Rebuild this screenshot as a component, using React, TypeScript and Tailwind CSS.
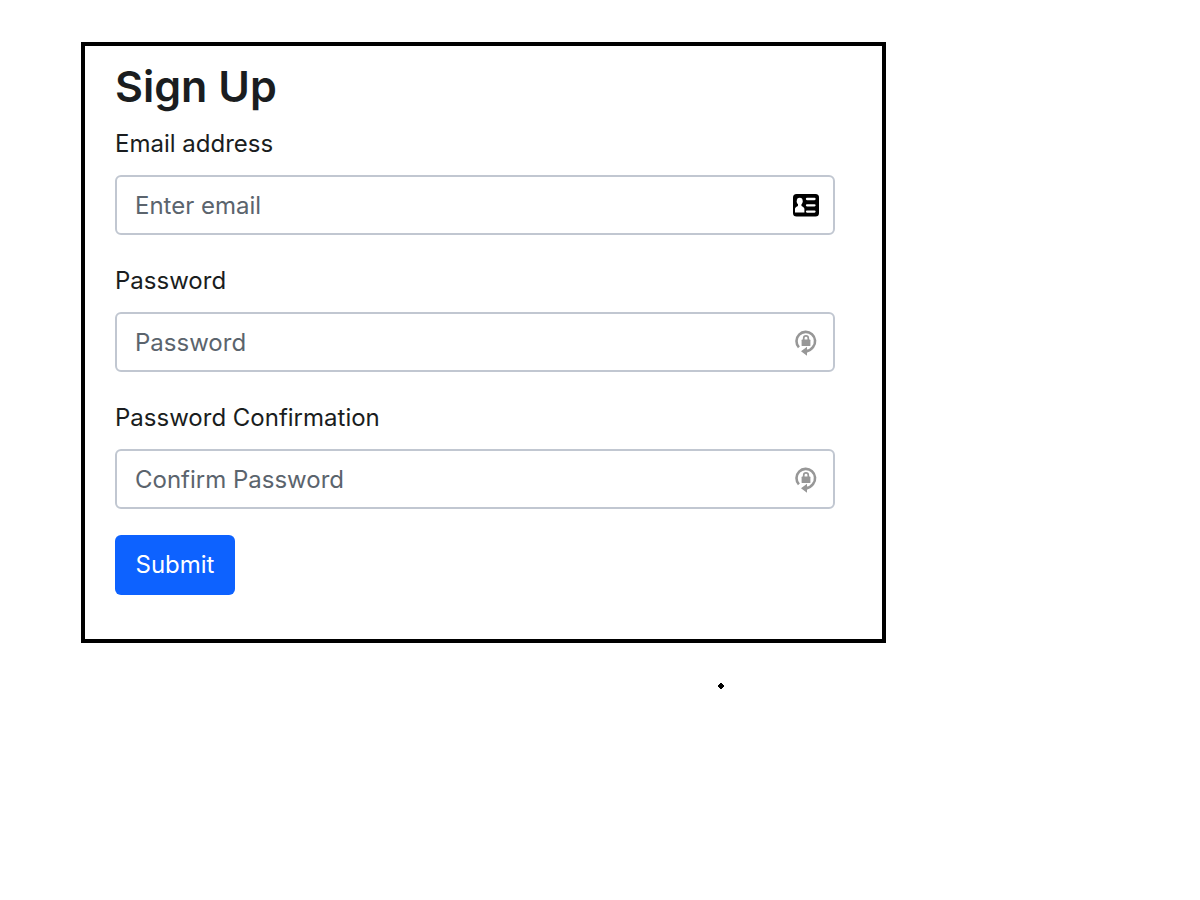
import React from "react";

function ContactCardIcon() {
  return (
    <svg viewBox="0 0 26 23" className="h-[23px] w-[26px]" aria-hidden="true">
      <rect width="26" height="22.500" rx="3.500" fill="#000" />
      <ellipse cx="6.700" cy="7.200" rx="3" ry="3.400" fill="#fff" />
      <path
        d="M5 9h3.400v2.400c0 1 3 1.400 3 3.600v3.500H2v-3.500c0-2.200 3-2.600 3-3.600z"
        fill="#fff"
      />
      <path
        d="M14 5h7.500M14 11.300h7.500M14 17.600h7.500"
        stroke="#fff"
        strokeWidth="2.300"
        strokeLinecap="round"
      />
    </svg>
  );
}

function PasswordResetIcon() {
  return (
    <svg viewBox="0 0 22 27" className="h-[27px] w-[22px]" aria-hidden="true">
      <path
        d="M3.900 18.400A9.300 9.300 0 1 1 18.100 17.900Q15.500 21.600 11 22.200"
        fill="none"
        stroke="#979797"
        strokeWidth="2.600"
      />
      <path d="M6 22.200l6-4.500v2.900l1.500 1.600-1.500 1.600v2.900z" fill="#979797" />
      <rect x="6.600" y="10.600" width="8.800" height="6.400" rx="0.600" fill="#979797" />
      <path
        d="M8.700 11.200V9.200a2.300 2.300 0 0 1 4.600 0v2"
        fill="none"
        stroke="#979797"
        strokeWidth="1.700"
      />
    </svg>
  );
}

type FieldProps = {
  id: string;
  label: string;
  type: string;
  placeholder: string;
  icon: React.ReactNode;
};

function Field({ id, label, type, placeholder, icon }: FieldProps) {
  return (
    <div className="flex flex-col gap-[13px]">
      <label htmlFor={id} className="leading-9">
        {label}
      </label>
      <div className="flex h-[60px] items-center rounded-md border-2 border-[#c1c7d1] bg-white pr-3.5 pl-[18px]">
        <input
          id={id}
          type={type}
          placeholder={placeholder}
          className="h-full min-w-0 flex-1 bg-transparent outline-none placeholder:text-[#5b646d]"
        />
        <span className="flex w-[26px] shrink-0 justify-center">{icon}</span>
      </div>
    </div>
  );
}

export default function App() {
  return (
    <main className="min-h-screen bg-white pt-[42px] pr-6 pl-[81px] font-['Inter','Liberation_Sans',sans-serif] text-2xl text-[#1a1d20]">
      <div className="flex w-full max-w-[805px] flex-col">
        <form
          className="border-4 border-black pt-4 pr-[47px] pb-11 pl-[30px]"
          onSubmit={(event) => event.preventDefault()}
        >
          <h1 className="mb-4 text-[43px] leading-12 font-semibold">Sign Up</h1>
          <div className="flex flex-col gap-7">
            <Field
              id="email"
              label="Email address"
              type="email"
              placeholder="Enter email"
              icon={<ContactCardIcon />}
            />
            <Field
              id="password"
              label="Password"
              type="password"
              placeholder="Password"
              icon={<PasswordResetIcon />}
            />
            <Field
              id="password-confirmation"
              label="Password Confirmation"
              type="password"
              placeholder="Confirm Password"
              icon={<PasswordResetIcon />}
            />
          </div>
          <button
            type="submit"
            className="mt-[26px] flex h-[60px] w-[120px] items-center justify-center rounded-md bg-[#0d62ff] text-white"
          >
            Submit
          </button>
        </form>
        <svg viewBox="0 0 6 6" className="mt-10 mr-[162px] size-1.5 self-end" aria-hidden="true">
          <path d="M2 0h2v1h1v1h1v2h-1v1h-1v1h-2v-1h-1v-1h-1v-2h1v-1h1z" fill="#000" />
        </svg>
      </div>
    </main>
  );
}
